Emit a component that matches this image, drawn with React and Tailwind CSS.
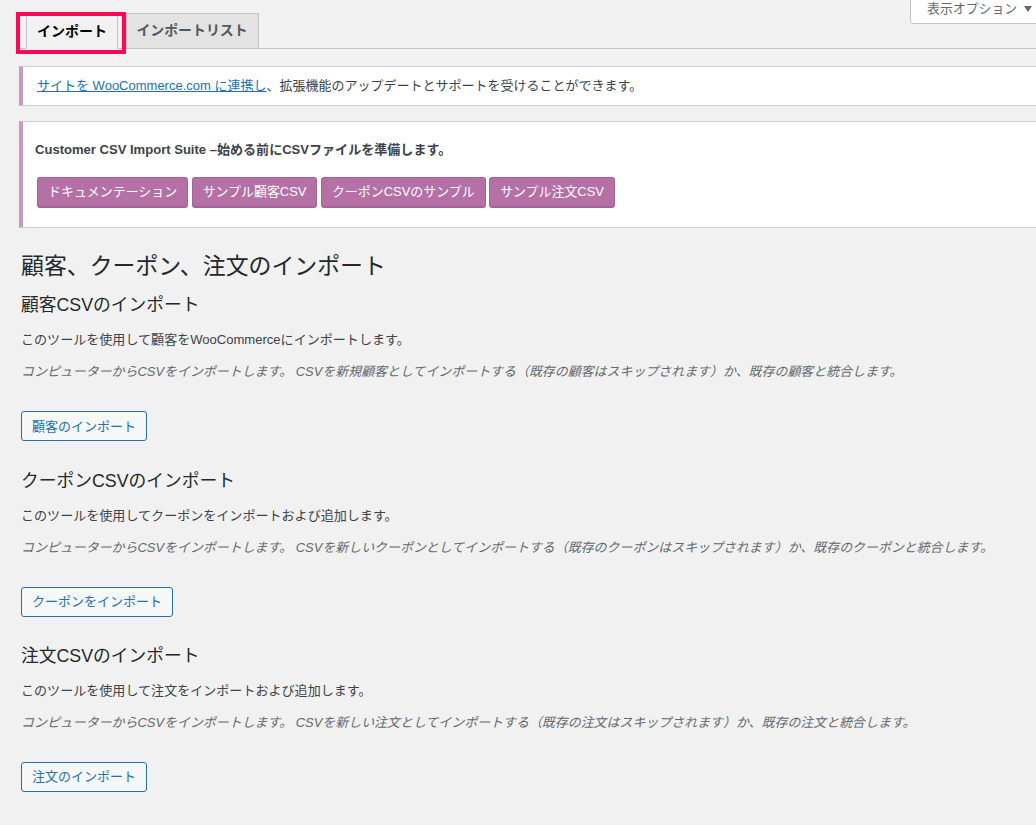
const FONT = "font-['Liberation_Sans','Noto_Sans_CJK_JP',sans-serif]";

function Section({ title, desc, note, button, className = "" }) {
  return (
    <section className={className}>
      <h3 className="text-[17.75px] leading-[24px] text-[#23282d] m-0">{title}</h3>
      <p className="mt-[13px] text-[13.05px] leading-[20px] text-[#3c434a]">{desc}</p>
      <p className="mt-[11.7px] text-[12.95px] leading-[20px] italic text-[#646970]">{note}</p>
      <button className="mt-[29.6px] h-[30px] px-[10px] rounded-[3px] border border-[#2271b1] bg-[#f6f7f7] text-[13px] text-[#2271b1] flex items-center">{button}</button>
    </section>
  );
}

function PurpleButton({ children }) {
  return (
    <button className="h-[31px] px-[10px] rounded-[3px] border border-[#a36597] border-b-[2px] bg-[#b570a6] text-[12.95px] text-white whitespace-nowrap">{children}</button>
  );
}

export default function App() {
  return (
    <div className={`${FONT} relative w-[1036px] h-[825px] overflow-hidden bg-[#f1f1f1]`}>
      <div className="absolute top-0 left-[910px] w-[140px] h-[24px] bg-white border border-t-0 border-[#c3c4c7] rounded-b-[4px] pl-[16px] flex items-start gap-[7px] text-[12.9px] leading-[17px] text-[#646970]">
        <span>表示オプション</span>
        <span className="mt-[6px] w-0 h-0 border-x-[4px] border-x-transparent border-t-[6px] border-t-[#646970]" />
      </div>

      <nav className="ml-[19px] pt-[13px] h-[49px] border-b border-[#c3c4c7] flex items-end pl-[7px] gap-[8px]">
        <div className="h-[36px] w-[92px] -mb-px bg-[#f1f1f1] border border-[#c3c4c7] border-b-[#f1f1f1] flex items-center justify-center text-[14px] font-bold text-[#000]">インポート</div>
        <div className="h-[36px] w-[133px] -mb-px bg-[#e3e3e3] border border-[#c3c4c7] flex items-center justify-center text-[13.9px] font-bold text-[#50575e]"><span className="-mt-[2px] -ml-px">インポートリスト</span></div>
      </nav>

      <div className="ml-[19px] mt-[17px] w-[1040px] h-[40px] bg-white border-y border-y-[#ccd0d4] border-l-[4px] border-l-[#cc99c2] flex items-center pl-[14px] text-[13px] text-[#3c434a]">
        <span><a className="text-[#2271b1] underline">サイトを WooCommerce.com に連携し</a>、拡張機能のアップデートとサポートを受けることができます。</span>
      </div>

      <div className="ml-[19px] mt-[15px] w-[1040px] h-[107px] bg-white border-y border-y-[#ccd0d4] border-l-[4px] border-l-[#cc99c2] pl-[12px] pt-[18px]">
        <p className="text-[13.05px] leading-[20px] font-bold text-[#3c434a]">Customer CSV Import Suite –始める前にCSVファイルを準備します。</p>
        <div className="mt-[17px] ml-[2px] flex gap-[3.5px]">
          <PurpleButton>ドキュメンテーション</PurpleButton>
          <PurpleButton>サンプル顧客CSV</PurpleButton>
          <PurpleButton>クーポンCSVのサンプル</PurpleButton>
          <PurpleButton>サンプル注文CSV</PurpleButton>
        </div>
      </div>

      <main className="ml-[21px] mt-[22px]">
        <h1 className="text-[22.9px] leading-[32px] text-[#23282d]">顧客、クーポン、注文のインポート</h1>
        <Section className="mt-[11px]" title="顧客CSVのインポート" desc="このツールを使用して顧客をWooCommerceにインポートします。" note="コンピューターからCSVをインポートします。 CSVを新規顧客としてインポートする（既存の顧客はスキップされます）か、既存の顧客と統合します。" button="顧客のインポート" />
        <Section className="mt-[27.6px]" title="クーポンCSVのインポート" desc="このツールを使用してクーポンをインポートおよび追加します。" note="コンピューターからCSVをインポートします。 CSVを新しいクーポンとしてインポートする（既存のクーポンはスキップされます）か、既存のクーポンと統合します。" button="クーポンをインポート" />
        <Section className="mt-[26.8px]" title="注文CSVのインポート" desc="このツールを使用して注文をインポートおよび追加します。" note="コンピューターからCSVをインポートします。 CSVを新しい注文としてインポートする（既存の注文はスキップされます）か、既存の注文と統合します。" button="注文のインポート" />
      </main>

      <div className="absolute left-[16px] top-[12px] w-[110px] h-[42px] border-[4px] border-[#fa0a55]" />
    </div>
  );
}
